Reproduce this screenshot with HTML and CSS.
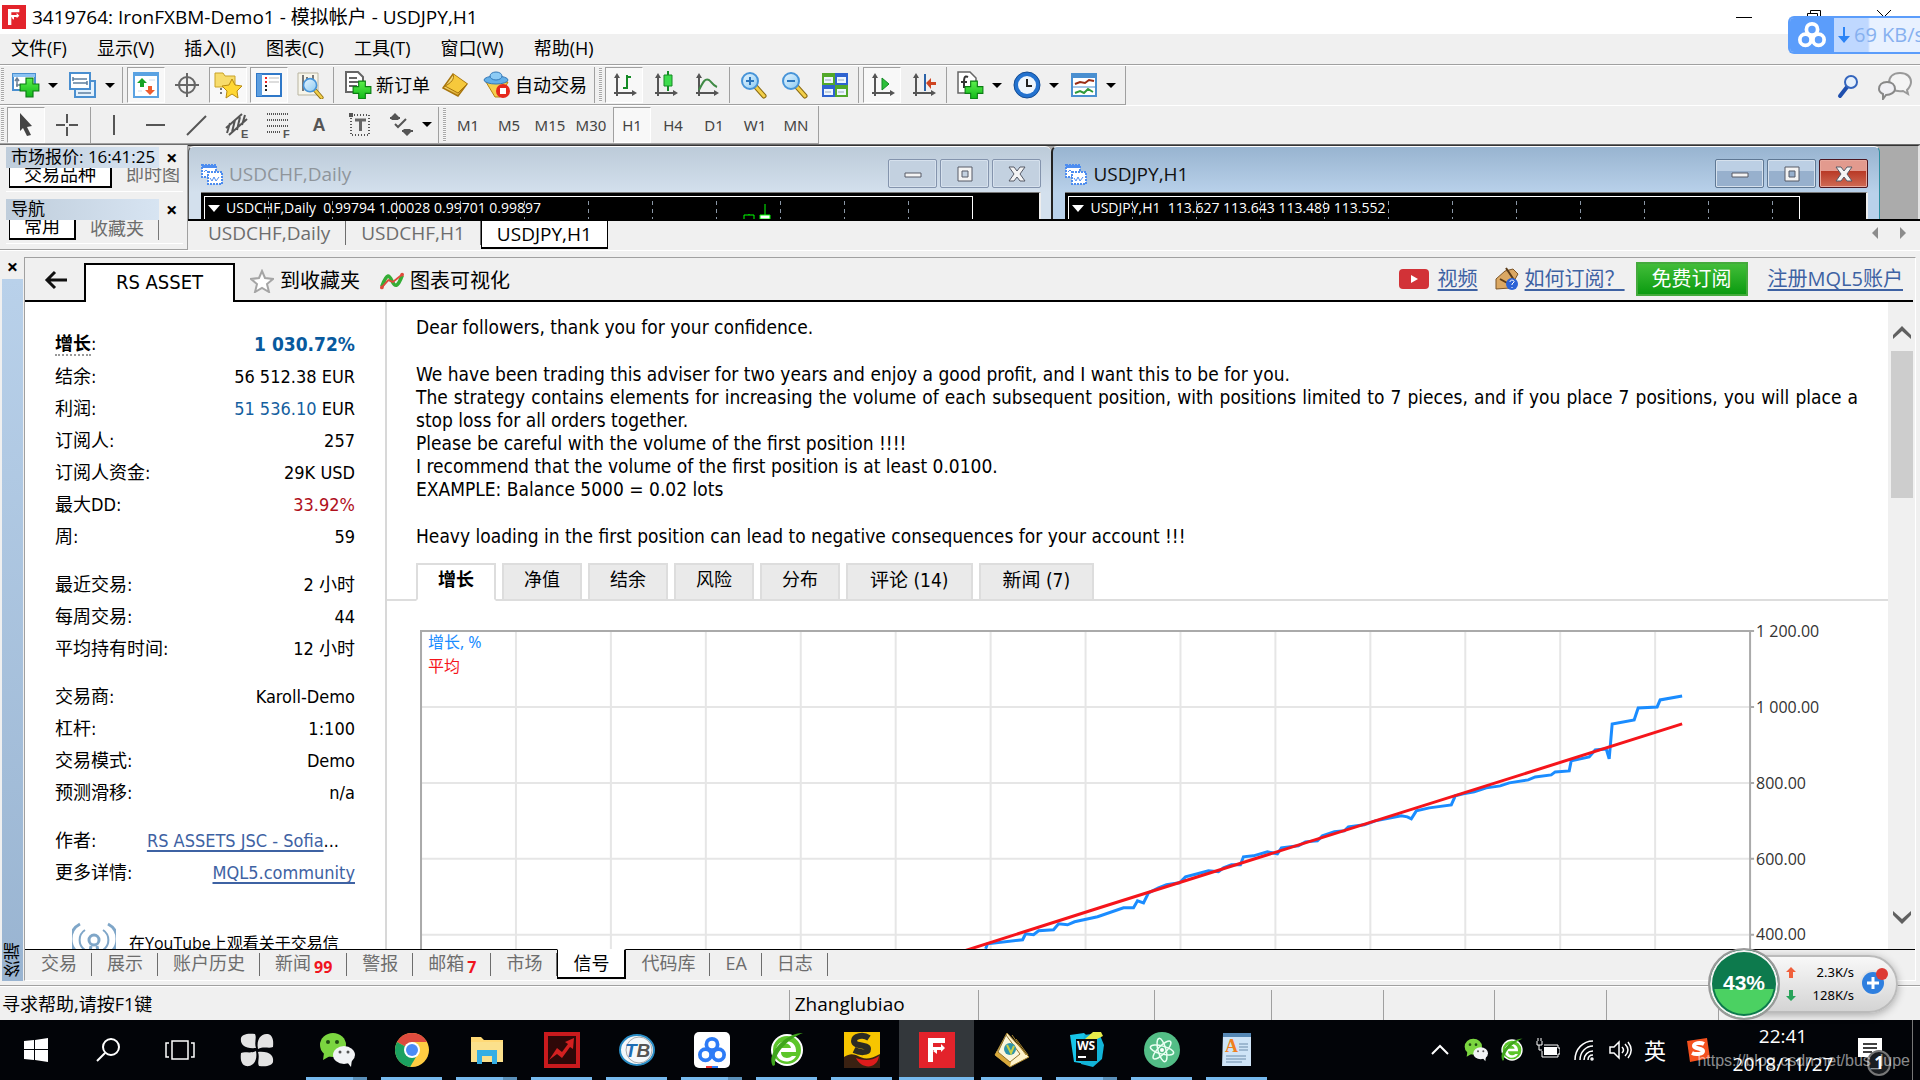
FILE: index.html
```html
<!DOCTYPE html>
<html lang="zh-CN">
<head>
<meta charset="utf-8">
<title>3419764: IronFXBM-Demo1 - 模拟帐户 - USDJPY,H1</title>
<link rel="stylesheet" href="styles.css">
</head>
<body>
<svg class="sprite" aria-hidden="true">
  <defs>
    <linearGradient id="gold" x1="0" y1="0" x2="1" y2="1"><stop offset="0" stop-color="#fdf3a0"/><stop offset="1" stop-color="#d99a12"/></linearGradient>
    <linearGradient id="lens" x1="0" y1="0" x2="1" y2="1"><stop offset="0" stop-color="#e8f6ff"/><stop offset="1" stop-color="#8ccaf2"/></linearGradient>
    <linearGradient id="plus" x1="0" y1="0" x2="0" y2="1"><stop offset="0" stop-color="#5cf04c"/><stop offset="1" stop-color="#10b818"/></linearGradient>
  </defs>
  <symbol id="axes" viewBox="0 0 28 28"><path d="M7 25V4M4 22h21" stroke="#555" stroke-width="2" fill="none"/><path d="M4 7l3-5 3 5zM22 19l5 3-5 3z" fill="#555"/></symbol>
  <symbol id="add" viewBox="0 0 18 18"><path d="M6 1h6v5h5v6h-5v5H6v-5H1V6h5z" fill="url(#plus)" stroke="#0a7d12" stroke-width="1"/></symbol>
  <symbol id="wechat" viewBox="0 0 36 36">
    <ellipse cx="14" cy="13" rx="13" ry="12" fill="#7bd540"/><path d="M5 21l-1 7 7-4z" fill="#7bd540"/><circle cx="9" cy="10" r="2" fill="#214d12"/><circle cx="18" cy="10" r="2" fill="#214d12"/>
    <ellipse cx="25" cy="23" rx="11" ry="9" fill="#f1f3f5"/><path d="M28 30l4 5 1-8z" fill="#f1f3f5"/><circle cx="21" cy="20" r="1.500" fill="#555"/><circle cx="29" cy="20" r="1.500" fill="#555"/>
  </symbol>
  <symbol id="esafe" viewBox="0 0 36 36">
    <circle cx="18" cy="18" r="16" fill="#fff"/><circle cx="18" cy="18" r="14" fill="#5cc52a"/>
    <path d="M27 20H12c0 7 8 7 11 4h4c-3 8-20 8-20-5C7 6 28 5 27 20zM12 16h10c-1-6-9-6-10 0z" fill="#fff"/>
    <path d="M4 34C-4 22 18 0 34 1 22 5 5 20 6 33z" fill="#3fa51c"/>
  </symbol>
  <symbol id="netdisk" viewBox="0 0 30 30"><g fill="none" stroke="currentColor" stroke-width="4"><circle cx="15" cy="9" r="6"/><circle cx="8" cy="20" r="6"/><circle cx="22" cy="20" r="6"/></g></symbol>
  <symbol id="chartwin" viewBox="0 0 22 22"><path d="M1 2h14v12H1z" fill="#fff" stroke="#4d8df0" stroke-width="2" stroke-dasharray="2 1"/><path d="M1 2h14v3H1z" fill="#4d8df0"/><path d="M7 9h14v12H7z" fill="#fff" stroke="#4d8df0" stroke-width="2" stroke-dasharray="2 1"/><path d="M3 9l2-2 3 3M9 15l2 3 2-4 2 4 3-4" fill="none" stroke="#4d8df0" stroke-width="1"/></symbol>
  <symbol id="bigF" viewBox="0 0 36 36"><path d="M0 0h36v36H0z" fill="#e3232b"/><path d="M9 6h17v5H14v4h8v-3l4 4-4 4v-2h-8v12H9z" fill="#fff"/><path d="M14 19l4-3v6z" fill="#fff"/></symbol>
  <symbol id="lensicon" viewBox="0 0 28 28"><path d="M17 16l8 9" stroke="#8a6a10" stroke-width="5" stroke-linecap="round"/><path d="M17 16l8 9" stroke="#f2cf4a" stroke-width="3" stroke-linecap="round"/><circle cx="11" cy="10" r="8" fill="url(#lens)" stroke="#4794d8" stroke-width="2"/></symbol>
</svg>

<header class="titlebar">
  <svg class="app-icon" viewBox="0 0 36 36"><use href="#bigF"/></svg>
  <h1>3419764: IronFXBM-Demo1 - 模拟帐户 - USDJPY,H1</h1>
  <div class="win-controls">
    <button aria-label="Minimize"><svg viewBox="0 0 16 16"><path d="M0 8.500h16" /></svg></button>
    <button aria-label="Restore"><svg viewBox="0 0 16 16"><path d="M1.500 4.500h10v10h-10zM4.500 4V1.500h10v10H12"/></svg></button>
    <button aria-label="Close"><svg viewBox="0 0 16 16"><path d="M1 1l14 14M15 1L1 15"/></svg></button>
  </div>
</header>

<nav class="menubar">
  <button>文件(F)</button><button>显示(V)</button><button>插入(I)</button><button>图表(C)</button><button>工具(T)</button><button>窗口(W)</button><button>帮助(H)</button>
</nav>

<div class="toolrow first">
  <div class="toolbar">
    <span class="grip"></span>
    <button class="tb" aria-label="New chart"><svg viewBox="0 0 28 28"><path d="M1 3h22v16H1z" fill="#fff" stroke="#4a8fd0" stroke-width="2"/><path d="M1 3h22v3H1z" fill="#8cc3f3"/><path d="M5 8v8M3 10l2-3 2 3M4 14h8" stroke="#6a7f95" stroke-width="1.500" fill="none"/><use href="#add" x="7" y="6" width="21" height="21"/></svg></button>
    <button class="drop" aria-label="New chart list"></button>
    <button class="tb" aria-label="Profiles"><svg viewBox="0 0 28 28"><path d="M6 10h20v16H6z" fill="#e4f1fc" stroke="#4a8fd0" stroke-width="2"/><path d="M1 2h20v16H1z" fill="#fff" stroke="#4a8fd0" stroke-width="2"/><path d="M4 8h14M4 6v4M18 12H4M18 10v4M9 22h13" stroke="#5d7f9f" stroke-width="1.500"/></svg></button>
    <button class="drop" aria-label="Profile list"></button>
    <span class="sep"></span>
    <button class="tb on" aria-label="Market Watch"><svg viewBox="0 0 28 28"><path d="M2 2h24v24H2z" fill="#fff" stroke="#5aa2e2" stroke-width="2"/><path d="M2 2h24v3H2z" fill="#5aa2e2"/><path d="M10 7l5 5h-3v4H8v-4H5z" fill="#18a327"/><path d="M18 24l-5-5h3v-4h4v4h3z" fill="#ee5c2e"/><path d="M17 9h6M6 20h4" stroke="#cde"/></svg></button>
    <button class="tb" aria-label="Data Window"><svg viewBox="0 0 28 28" fill="none" stroke="#666"><circle cx="14" cy="14" r="8" stroke-width="2"/><path d="M14 2v24M2 14h24" stroke-width="2"/></svg></button>
    <button class="tb on" aria-label="Navigator"><svg viewBox="0 0 28 28"><path d="M1 2h8l2 3h10v11H1z" fill="#f7dc6c" stroke="#c9a227"/><path d="M7 17v8" stroke="#777" stroke-width="2" stroke-dasharray="2 2"/><path d="M18 8l3 6 7 1-5 5 1 7-6-4-6 4 1-7-5-5 7-1z" fill="#ffd733" stroke="#b98b10"/></svg></button>
    <button class="tb on" aria-label="Terminal"><svg viewBox="0 0 28 28"><path d="M2 3h24v22H2z" fill="#fff" stroke="#2f78c8" stroke-width="2"/><path d="M2 3h5v22H2z" fill="#5d9fe0"/><path d="M10 7h2M10 11h2" stroke="#e22" stroke-width="2"/><path d="M14 7h10M14 11h10" stroke="#bbb" stroke-width="1"/><path d="M10 15h2M10 19h2" stroke="#222" stroke-width="2"/></svg></button>
    <button class="tb" aria-label="Strategy Tester"><svg viewBox="0 0 28 28"><path d="M2 2h20v22H2z" fill="#f7f5ea" stroke="#b9b5a0"/><path d="M7 4v16M11 6v8M17 4v16" stroke="#777" stroke-width="2"/><use href="#lensicon" x="5" y="6" width="23" height="23"/></svg></button>
    <span class="sep"></span>
    <button class="tb wide"><svg viewBox="0 0 28 28"><path d="M2 1h12l5 5v15H2z" fill="#fff" stroke="#666" stroke-width="2"/><path d="M5 7h8M5 11h11M5 15h8" stroke="#666" stroke-width="2"/><use href="#add" x="8" y="9" width="20" height="20"/></svg><span>新订单</span></button>
    <button class="tb" aria-label="MetaEditor"><svg viewBox="0 0 28 28"><path d="M2 17L12 3l14 10-9 12z" fill="url(#gold)" stroke="#a8750c" stroke-width="1.500"/><path d="M12 3c2 5-2 9-8 12l13 7 9-9" fill="#f6c93c" stroke="#a8750c"/></svg></button>
    <button class="tb wide"><svg viewBox="0 0 28 28"><path d="M3 11h22l-8 15h-5z" fill="#f5cf4c" stroke="#b5820f"/><ellipse cx="13" cy="9" rx="12" ry="4" fill="#64b0e8" stroke="#3378b8"/><ellipse cx="13" cy="5" rx="6" ry="4" fill="#8ccbf5" stroke="#3378b8"/><circle cx="20" cy="20" r="7" fill="#e5281c"/><path d="M17 17h6v6h-6z" fill="#fff"/></svg><span>自动交易</span></button>
    <span class="sep"></span>
    <span class="grip"></span>
    <button class="tb on" aria-label="Bar chart"><svg viewBox="0 0 28 28"><use href="#axes"/><path d="M17 4v14M13 17h4M17 6h4" stroke="#148a25" stroke-width="2"/></svg></button>
    <button class="tb" aria-label="Candlesticks"><svg viewBox="0 0 28 28"><use href="#axes"/><path d="M17 0v20" stroke="#148a25" stroke-width="2"/><path d="M13 4h8v11h-8z" fill="#3ddc4c" stroke="#148a25"/></svg></button>
    <button class="tb" aria-label="Line chart"><svg viewBox="0 0 28 28"><use href="#axes"/><path d="M7 19c4-8 6-12 10-10 3 2 3 5 8 7" fill="none" stroke="#3f8a45" stroke-width="2"/></svg></button>
    <span class="sep"></span>
    <button class="tb" aria-label="Zoom in"><svg viewBox="0 0 28 28"><use href="#lensicon"/><path d="M7 10h8M11 6v8" stroke="#2a75bd" stroke-width="2"/></svg></button>
    <button class="tb" aria-label="Zoom out"><svg viewBox="0 0 28 28"><use href="#lensicon"/><path d="M7 10h8" stroke="#2a75bd" stroke-width="2"/></svg></button>
    <button class="tb" aria-label="Tile windows"><svg viewBox="0 0 28 28"><path d="M1 2h13v12H1zM14 14h13v12H14z" fill="#52a82a"/><path d="M14 2h13v12H14zM1 14h13v12H1z" fill="#2f63d0"/><path d="M3 6h9v6H3zM16 6h9v6h-9zM3 18h9v6H3zM16 18h9v6h-9z" fill="#eef6ff"/><path d="M4 9h6M17 9h6M4 21h6M17 21h6" stroke="#9ab" stroke-width="1"/></svg></button>
    <span class="sep"></span>
    <button class="tb on" aria-label="Auto scroll"><svg viewBox="0 0 28 28"><use href="#axes"/><path d="M14 7l7 6-7 6z" fill="#2cbf3a" stroke="#148a25"/></svg></button>
    <button class="tb" aria-label="Chart shift"><svg viewBox="0 0 28 28"><use href="#axes"/><path d="M16 3v17" stroke="#2a62a8" stroke-width="2"/><path d="M17 12l5-5v4h5v3h-5v4z" fill="#cf4420"/></svg></button>
    <span class="sep"></span>
    <button class="tb" aria-label="Indicators"><svg viewBox="0 0 28 28"><path d="M2 1h12l6 6v15H2z" fill="#fff" stroke="#666" stroke-width="1.500"/><path d="M12 6c-4-2-4 2-4 6v5M5 11h6" stroke="#333" stroke-width="2" fill="none"/><use href="#add" x="8" y="9" width="20" height="20"/></svg></button>
    <button class="drop" aria-label="Indicator list"></button>
    <button class="tb" aria-label="Periods"><svg viewBox="0 0 28 28"><circle cx="14" cy="14" r="13" fill="#2372cf" stroke="#134c94"/><circle cx="14" cy="14" r="9" fill="#eef5fc"/><path d="M14 8v7h5" stroke="#222" stroke-width="2" fill="none"/></svg></button>
    <button class="drop" aria-label="Period list"></button>
    <button class="tb" aria-label="Templates"><svg viewBox="0 0 28 28"><path d="M2 3h24v22H2z" fill="#fff" stroke="#4a8fd0" stroke-width="2"/><path d="M2 3h24v4H2z" fill="#4a8fd0"/><path d="M5 13l5-2 5 1 4-3 5 1" fill="none" stroke="#9a2c14" stroke-width="2"/><path d="M3 16h22" stroke="#4a8fd0"/><path d="M5 22l5-2 4 2 4-4 5 3" fill="none" stroke="#2f9a3a" stroke-width="2"/></svg></button>
    <button class="drop" aria-label="Template list"></button>
  </div>
  <div class="tool-end">
    <button aria-label="Search"><svg viewBox="0 0 28 28"><path d="M6 24l7-9" stroke="#1f4fae" stroke-width="4" stroke-linecap="round"/><circle cx="17" cy="10" r="6" fill="#e6f0fb" stroke="#3465bd" stroke-width="2"/></svg></button>
    <button aria-label="Chat"><svg viewBox="0 0 34 28"><path d="M22 1c7 0 11 4 11 9 0 4-2 6-4 8l1 4-5-3c-8 1-14-2-14-8 0-6 4-10 11-10z" fill="#f4f4f4" stroke="#999" stroke-width="2"/><path d="M9 10c5 0 8 3 8 7 0 3-4 6-9 6l-3 4v-5c-2-1-4-3-4-5 0-4 3-7 8-7z" fill="#f0f0f4" stroke="#888" stroke-width="2"/></svg></button>
  </div>
</div>

<div class="toolrow second">
  <div class="toolbar">
    <span class="grip"></span>
    <button class="tb on" aria-label="Cursor"><svg viewBox="0 0 28 28"><path d="M8 2l12 13-5 1 4 8-4 1-4-8-3 3z" fill="#444"/></svg></button>
    <button class="tb" aria-label="Crosshair"><svg viewBox="0 0 28 28"><path d="M14 3v9M14 16v9M3 14h9M16 14h9" stroke="#555" stroke-width="2"/></svg></button>
    <span class="sep"></span>
    <button class="tb" aria-label="Vertical line"><svg viewBox="0 0 28 28"><path d="M14 4v20" stroke="#555" stroke-width="2"/></svg></button>
    <button class="tb" aria-label="Horizontal line"><svg viewBox="0 0 28 28"><path d="M5 14h19" stroke="#555" stroke-width="2"/></svg></button>
    <button class="tb" aria-label="Trendline"><svg viewBox="0 0 28 28"><path d="M5 24L24 5" stroke="#555" stroke-width="2"/></svg></button>
    <button class="tb" aria-label="Channel"><svg viewBox="0 0 28 28"><path d="M3 17L19 3M6 24L24 8M7 12l-3 10M12 9l-3 12M17 6l-3 13M22 4l-3 10" stroke="#555" stroke-width="2"/><text x="18" y="27" class="mini">E</text></svg></button>
    <button class="tb" aria-label="Fibonacci"><svg viewBox="0 0 28 28"><path d="M3 3h21M3 9h21M3 15h21M3 21h13" stroke="#555" stroke-width="2" stroke-dasharray="1 1"/><text x="19" y="27" class="mini">F</text></svg></button>
    <button class="tb letter">A</button>
    <button class="tb" aria-label="Text label"><svg viewBox="0 0 28 28"><path d="M5 4h18v20H5z" fill="none" stroke="#555" stroke-width="2" stroke-dasharray="1 2"/><path d="M9 9h11M14.500 9v11" stroke="#666" stroke-width="3"/><path d="M3 2h4v4H3z" fill="#555"/></svg></button>
    <button class="tb" aria-label="Arrows"><svg viewBox="0 0 28 28"><path d="M8 2l5 5-2 2H5L3 7zM20 25l5-5-2-2h-6l-2 2z" fill="#555"/><path d="M8 13l3 3 8-8M3 7h10M15 20h11" stroke="#555" stroke-width="2" fill="none"/></svg></button>
    <button class="drop near" aria-label="Arrow list"></button>
    <span class="sep"></span>
    <span class="grip"></span>
    <button class="tb tf">M1</button><button class="tb tf">M5</button><button class="tb tf">M15</button><button class="tb tf">M30</button><button class="tb tf on">H1</button><button class="tb tf">H4</button><button class="tb tf">D1</button><button class="tb tf">W1</button><button class="tb tf">MN</button>
  </div>
</div>

<div class="workspace">
  <aside class="docks">
    <section>
      <div class="dock-head"><h2>市场报价: 16:41:25</h2><button aria-label="Close">×</button></div>
      <div class="dock-tabs"><button class="on">交易品种</button><button>即时图</button></div>
    </section>
    <section>
      <div class="dock-head"><h2>导航</h2><button aria-label="Close">×</button></div>
      <div class="dock-tabs narrow"><button class="on">常用</button><button>收藏夹</button></div>
    </section>
  </aside>
  <div class="charts">
    <div class="mdi">
      <section class="child">
        <div class="child-head"><svg class="cicon" viewBox="0 0 22 22"><use href="#chartwin"/></svg><h2>USDCHF,Daily</h2>
          <button aria-label="Minimize"><svg viewBox="0 0 20 20"><path d="M2 9h16v4H2z" class="glyph"/></svg></button>
          <button aria-label="Maximize"><svg viewBox="0 0 20 20"><path d="M3 3h14v14H3zM7 7h6v6H7z" fill-rule="evenodd" class="glyph"/></svg></button>
          <button aria-label="Close"><svg viewBox="0 0 20 20"><path d="M2 3h5l3 4 3-4h5l-5 7 5 7h-5l-3-4-3 4H2l5-7z" class="glyph"/></svg></button></div>
        <div class="plot"><div class="frame"><i></i>USDCHF,Daily&nbsp; 0.99794 1.00028 0.99701 0.99897<svg class="candles" viewBox="0 0 32 16"><path d="M1 16v-4h10v4M6 12v-1M22 12V1" fill="none" stroke="#0f0" stroke-width="1"/><path d="M17 12h10v4H17z" fill="#fff" stroke="#0f0"/></svg></div></div>
      </section>
      <section class="child active">
        <div class="child-head"><svg class="cicon" viewBox="0 0 22 22"><use href="#chartwin"/></svg><h2>USDJPY,H1</h2>
          <button aria-label="Minimize"><svg viewBox="0 0 20 20"><path d="M2 9h16v4H2z" class="glyph"/></svg></button>
          <button aria-label="Maximize"><svg viewBox="0 0 20 20"><path d="M3 3h14v14H3zM7 7h6v6H7z" fill-rule="evenodd" class="glyph"/></svg></button>
          <button aria-label="Close" class="red"><svg viewBox="0 0 20 20"><path d="M2 3h5l3 4 3-4h5l-5 7 5 7h-5l-3-4-3 4H2l5-7z" class="glyph"/></svg></button></div>
        <div class="plot"><div class="frame"><i></i>USDJPY,H1&nbsp; 113.627 113.643 113.489 113.552</div></div>
      </section>
    </div>
    <div class="chart-tabs">
      <button>USDCHF,Daily</button><button>USDCHF,H1</button><button class="on">USDJPY,H1</button>
      <div class="arrows"><button aria-label="Scroll left"><svg viewBox="0 0 6 12"><path d="M6 0v12L0 6z"/></svg></button><button aria-label="Scroll right"><svg viewBox="0 0 6 12"><path d="M0 0v12l6-6z"/></svg></button></div>
    </div>
  </div>
</div>

<main class="terminal">
  <div class="rail"><button aria-label="Close">×</button><div class="rail-bar"><span>终端</span></div></div>
  <div class="panel">
    <div class="signal-head">
      <button class="back" aria-label="Back"><svg viewBox="0 0 24 20"><path d="M11 2L3 10l8 8M3 10h20" fill="none" stroke="#111" stroke-width="3"/></svg></button>
      <h2>RS ASSET</h2>
      <div class="head-actions">
        <button><svg viewBox="0 0 24 24"><path d="M12 2l3 7 8 1-6 5 2 8-7-4-7 4 2-8-6-5 8-1z" fill="#fff" stroke="#a5a5a5" stroke-width="2"/></svg>到收藏夹</button>
        <button><svg viewBox="0 0 26 24"><path d="M2 18c6-16 8-12 11-6s6 8 11-6" fill="none" stroke="#35ad36" stroke-width="4"/><path d="M2 19l7-8 5 2L24 5" fill="none" stroke="#e04a3c" stroke-width="2"/><circle cx="2" cy="19" r="2" fill="#e04a3c"/><circle cx="24" cy="5" r="2" fill="#e04a3c"/></svg>图表可视化</button>
      </div>
      <div class="head-links">
        <svg class="yt" viewBox="0 0 30 20"><rect width="30" height="20" rx="4" fill="#d23237"/><path d="M12 6l7 4-7 4z" fill="#fff"/></svg>
        <a href="#video">视频</a>
        <svg class="hand" viewBox="0 0 24 24"><path d="M1 22V12l9-8 8-2 5 5-8 14z" fill="#dba863" stroke="#7d5526"/><path d="M11 1l8 12M5 12l9 5" stroke="#5b3b18" stroke-width="2"/><circle cx="17" cy="17" r="6" fill="#2b62d6"/><path d="M15 15c0-3 5-2 4 0l-2 2v1M17 20v1" stroke="#fff" fill="none"/></svg>
        <a href="#how">如何订阅？</a>
        <button class="subscribe">免费订阅</button>
        <a href="#register" class="register">注册MQL5账户</a>
      </div>
    </div>
    <div class="signal-body">
      <aside class="stats">
        <table>
          <tbody>
            <tr class="growth"><th><abbr>增长</abbr>:</th><td>1 030.72%</td></tr>
            <tr><th>结余:</th><td>56 512.38 EUR</td></tr>
            <tr><th>利润:</th><td><span class="blue">51 536.10</span> EUR</td></tr>
            <tr><th>订阅人:</th><td>257</td></tr>
            <tr><th>订阅人资金:</th><td>29K USD</td></tr>
            <tr><th>最大DD:</th><td class="loss">33.92%</td></tr>
            <tr><th>周:</th><td>59</td></tr>
          </tbody>
          <tbody>
            <tr><th>最近交易:</th><td>2 小时</td></tr>
            <tr><th>每周交易:</th><td>44</td></tr>
            <tr><th>平均持有时间:</th><td>12 小时</td></tr>
          </tbody>
          <tbody>
            <tr><th>交易商:</th><td>Karoll-Demo</td></tr>
            <tr><th>杠杆:</th><td>1:100</td></tr>
            <tr><th>交易模式:</th><td>Demo</td></tr>
            <tr><th>预测滑移:</th><td>n/a</td></tr>
          </tbody>
          <tbody>
            <tr><th>作者:</th><td class="author"><a href="#author">RS ASSETS JSC - Sofia</a>...</td></tr>
            <tr><th>更多详情:</th><td><a href="#community">MQL5.community</a></td></tr>
          </tbody>
        </table>
        <div class="promo">
          <svg viewBox="0 0 44 44" fill="none" stroke="#7fa6c8" stroke-width="3"><circle cx="22" cy="20" r="5"/><path d="M13 30a12 12 0 0 1 0-20M31 30a12 12 0 0 0 0-20" stroke-width="2"/><path d="M8 34a17 17 0 0 1 0-30M36 34a17 17 0 0 0 0-30"/><path d="M19 26l-3 16M25 26l3 16"/></svg>
          <p>在YouTube上观看关于交易信</p>
        </div>
      </aside>
      <article class="details">
        <div class="about">
          <p>Dear followers, thank you for your confidence.</p>
          <p>We have been trading this adviser for two years and enjoy a good profit, and I want this to be for you.<br>The strategy contains elements for increasing the volume of each subsequent position, with positions limited to 7 pieces, and if you place 7 positions, you will place a stop loss for all orders together.<br>Please be careful with the volume of the first position !!!!<br>I recommend that the volume of the first position is at least 0.0100.<br>EXAMPLE: Balance 5000 = 0.02 lots</p>
          <p>Heavy loading in the first position can lead to negative consequences for your account !!!</p>
        </div>
        <div class="detail-tabs"><button class="on">增长</button><button>净值</button><button>结余</button><button>风险</button><button>分布</button><button class="counted">评论 (14)</button><button class="counted">新闻 (7)</button></div>
        <svg class="growth-chart" viewBox="0 0 1468 330">
          <path d="M96 11v319M191 11v319M286 11v319M381 11v319M476 11v319M571 11v319M666 11v319M761 11v319M856 11v319M951 11v319M1046 11v319M1141 11v319M1236 11v319M1 87h1329M1 163h1329M1 239h1329M1 315h1329" stroke="#e6e6e6" stroke-width="2" fill="none"/>
          <path d="M1 330V11h1334M1331 11v319M1331 87h4M1331 163h4M1331 239h4M1331 315h4" stroke="#aaa" stroke-width="2" fill="none"/>
          <g transform="translate(-420 -620)" fill="none" stroke-width="3">
            <path d="M986 949l2-5 35-4 3-6 8 1 5-4 15-1 5-6 9 1 7-3 23-5 26-9h10l4-7 6 2 5-10 10-5 8-3 13-2 6-6 12-3 11-3 10 1 5-4 8-3h9l3-8 10-1 14-4 10 2 4-6 17-2 7-4 12-1 5-5 12-4 10-1 4-4 16-2 11-4 26-5 6 1 4 2 5-8 13-3 22-3 4-9 8-2 11-2 12-4 14-2 9-3 19-3 7-3 16-2 4-3 14-1 2-10 18-4 6-7 11-1 3 10 3-35 22-4 4-12 19-1 3-7 22-4" stroke="#1a8cff"/>
            <path d="M965 951L1100 908L1683 724" stroke="#f5151b" stroke-width="3"/>
          </g>
          <text x="8" y="28" class="leg blue-t">增长, %</text>
          <text x="8" y="52" class="leg red-t">平均</text>
          <g class="scale"><text x="1337" y="17">1 200.00</text><text x="1337" y="93">1 000.00</text><text x="1337" y="169">800.00</text><text x="1337" y="245">600.00</text><text x="1337" y="320">400.00</text></g>
        </svg>
      </article>
      <div class="scrollbar"><svg viewBox="0 0 18 14"><path d="M0 13V9l9-9 9 9v4L9 5z"/></svg><div class="thumb"></div><svg viewBox="0 0 18 14" class="down"><path d="M0 1v4l9 9 9-9V1L9 9z"/></svg></div>
    </div>
    <nav class="terminal-tabs"><button>交易</button><button>展示</button><button>账户历史</button><button>新闻<sub>99</sub></button><button>警报</button><button>邮箱<sub>7</sub></button><button>市场</button><button class="on">信号</button><button>代码库</button><button>EA</button><button>日志</button></nav>
  </div>
</main>

<footer class="statusbar"><span class="help">寻求帮助,请按F1键</span><span class="user">Zhanglubiao</span><span class="c2"></span><span class="c3"></span><span></span><span></span><span></span><span></span><span class="c5"></span></footer>

<div class="taskbar">
  <div class="apps">
    <button class="sys" aria-label="Start"><svg viewBox="0 0 24 24"><path d="M0 3l10-1v9H0zM11 2l13-2v11H11zM0 12h10v10L0 21zM11 12h13v12l-13-2z" fill="#fff"/></svg></button>
    <button class="sys" aria-label="Search"><svg viewBox="0 0 24 24" fill="none" stroke="#fff" stroke-width="2"><circle cx="15" cy="9" r="8"/><path d="M9 15l-8 8"/></svg></button>
    <button class="sys" aria-label="Task view"><svg class="tv" viewBox="0 0 30 20" fill="none" stroke="#fff" stroke-width="1.500"><path d="M7 1h16v18H7zM4 3H1v14h3M26 3h3v14h-3"/></svg></button>
    <button class="app idle" aria-label="Fan"><svg viewBox="0 0 36 36" fill="#e3e3e3"><path d="M17 16C5 17 1 12 2 6c1-3 5-5 14-4 2 4-1 8 1 14z"/><path d="M19 17c-2-11 4-16 10-15 4 1 6 5 5 13-4 2-9-1-15 2z"/><path d="M19 20c12-1 16 4 15 10-1 3-5 5-14 4-2-4 1-8-1-14z"/><path d="M17 19c2 11-4 16-10 15-4-1-6-5-5-13 4-2 9 1 15-2z"/></svg></button>
    <button class="app multi" aria-label="WeChat"><svg viewBox="0 0 36 36"><use href="#wechat"/></svg></button>
    <button class="app" aria-label="Chrome"><svg viewBox="0 0 36 36"><circle cx="18" cy="18" r="17" fill="#ffcd42"/><path d="M18 18L3 10A17 17 0 0 1 33 10H18z" fill="#de4b3e"/><path d="M18 18L3 10a17 17 0 0 0 13 25l6-10z" fill="#1ba160"/><circle cx="18" cy="18" r="8" fill="#fff"/><circle cx="18" cy="18" r="6" fill="#4c8bf5"/></svg></button>
    <button class="app multi" aria-label="Explorer"><svg viewBox="0 0 36 36"><path d="M2 5h10l3 3h19v22H2z" fill="#ffd976"/><path d="M2 10h32v20H2z" fill="#fbe08c"/><path d="M8 32V18h20v14h-5v-8H13v8z" fill="#35aee4"/></svg></button>
    <button class="app" aria-label="Trading"><svg viewBox="0 0 36 36"><path d="M0 0h36v36H0z" fill="#c91a1d"/><path d="M4 4h28v28H4z" fill="#2e0808"/><path d="M5 28l8-12 5 4 6-8-3-2 9-4-1 11-3-2-8 11-5-4z" fill="#d32020"/></svg></button>
    <button class="app" aria-label="TB"><svg viewBox="0 0 36 36"><ellipse cx="18" cy="18" rx="17" ry="15" fill="#f4f8fb" stroke="#2a8cc4" stroke-width="2"/><ellipse cx="20" cy="18" rx="13" ry="13" fill="none" stroke="#aaa"/><text x="6" y="25" class="tb-mark" fill="#1c6db5">T<tspan fill="#555">B</tspan></text></svg></button>
    <button class="app multi" aria-label="Netdisk"><svg viewBox="0 0 36 36"><rect width="36" height="36" rx="5" fill="#fff"/><use href="#netdisk" x="4" y="4" width="28" height="28" color="#2d7bf6"/><path d="M12 34h6v2h-6z" fill="#e33"/><path d="M18 34h6v2h-6z" fill="#2d7bf6"/></svg></button>
    <button class="app" aria-label="Browser"><svg viewBox="0 0 36 36"><use href="#esafe"/></svg></button>
    <button class="app" aria-label="Sublime"><svg viewBox="0 0 36 36"><path d="M0 0h36v36H0z" fill="#f7c500"/><path d="M0 25c6-4 10-3 14-1s10 5 22-2v14H0z" fill="#3a2112"/><path d="M12 26c6 2 14 4 23-2-2 14-18 13-23 2z" fill="#de1c1c"/><path d="M25 6c-6-4-15-2-15 3 0 6 14 3 14 8 0 4-8 4-14 1" fill="none" stroke="#2b2b23" stroke-width="6"/></svg></button>
    <button class="app current" aria-label="MetaTrader"><svg viewBox="0 0 36 36"><use href="#bigF"/></svg></button>
    <button class="app" aria-label="Cards"><svg viewBox="0 0 36 36"><path d="M13 1l22 24-19 10L1 23z" fill="#fff3cb" stroke="#a8842c"/><path d="M1 23l15 12 1-5L3 19z" fill="#d9a93a"/><path d="M12 3l14 19-10 8L4 20z" fill="#fbf6da" stroke="#8f722c"/><path d="M18 3l14 20M22 7l12 16" stroke="#a8842c"/><ellipse cx="16" cy="17" rx="6" ry="6" fill="#2f93a8"/><path d="M13 13l4 8 3-7" stroke="#c9cf42" stroke-width="2" fill="none"/></svg></button>
    <button class="app multi" aria-label="WebStorm"><svg viewBox="0 0 36 36"><path d="M1 3l14-2 4 4-2 27-12-2z" fill="#18c5e8"/><path d="M15 3l15-2 5 12-2 14-9 8-12-3z" fill="#12b4d8"/><path d="M16 7l8-7h8l2 4-12 6z" fill="#e8ec4a"/><path d="M7 7h21v22H7z" fill="#0b0b0b"/><text x="8" y="18" class="ws">WS</text><path d="M9 25h8" stroke="#fff" stroke-width="2"/></svg></button>
    <button class="app" aria-label="Atom"><svg viewBox="0 0 36 36"><circle cx="18" cy="18" r="18" fill="#53bd86"/><g fill="none" stroke="#eafff3" stroke-width="1.500"><ellipse cx="18" cy="18" rx="4" ry="12" transform="rotate(-15 18 18)"/><ellipse cx="18" cy="18" rx="4" ry="12" transform="rotate(45 18 18)"/><ellipse cx="18" cy="18" rx="4" ry="12" transform="rotate(105 18 18)"/></g><circle cx="18" cy="18" r="2" fill="#fff"/></svg></button>
    <button class="app" aria-label="WordPad"><svg viewBox="0 0 36 36"><path d="M4 2h28v32H3z" fill="#cfe4f7"/><path d="M4 1h28v4H4z" fill="#5688b5"/><text x="6" y="20" class="wp">A</text><path d="M20 12h9M20 15h9M20 18h9M7 24h20M7 27h20M7 30h16" stroke="#6d8cab" stroke-width="1"/></svg></button>
  </div>
  <div class="tray">
    <svg class="t18" viewBox="0 0 18 18"><path d="M1 13l8-8 8 8" fill="none" stroke="#fff" stroke-width="2"/></svg>
    <svg class="t24" viewBox="0 0 36 36"><use href="#wechat"/></svg>
    <svg class="t24" viewBox="0 0 36 36"><use href="#esafe"/></svg>
    <svg class="t24" viewBox="0 0 24 24"><path d="M8 9h13v8H8z" fill="#fff"/><path d="M8 7h14v3h2v6h-2v3H6v-6M1 3v4h5V3M2 0v3M5 0v3M3 7v5h3" fill="none" stroke="#fff"/></svg>
    <svg class="t24" viewBox="0 0 24 24" fill="none" stroke="#fff" stroke-width="1.500"><path d="M3 22C3 11 11 3 21 3M8 22c0-8 6-14 13-14M12 22c0-5 4-9 9-9M16 22c0-3 2-5 5-5"/><circle cx="20" cy="21" r="1"/></svg>
    <svg class="t24" viewBox="0 0 24 24" fill="none" stroke="#fff" stroke-width="1.500"><path d="M2 9h4l5-5v16l-5-5H2zM14 9c2 2 2 4 0 6M17 6c4 4 4 8 0 12M20 4c4 5 4 11 0 16"/></svg>
    <span class="ime">英</span>
    <svg class="t24 sogou" viewBox="0 0 24 24"><path d="M1 3l20-3 3 20-20 4z" fill="#f4511e"/><path d="M18 6c-4-2-10-1-10 2s9 2 9 5-7 4-11 2" fill="none" stroke="#fff" stroke-width="4"/></svg>
    <div class="clock"><time>22:41</time><time>2018/11/27</time></div>
    <div class="notice"><svg viewBox="0 0 24 24"><path d="M0 0h24v19h-6v5l-6-5H0z" fill="#fff"/><path d="M5 6h14M5 10h14M5 14h9" stroke="#000" stroke-width="1.500"/></svg><b>1</b></div>
  </div>
  <div class="watermark">https://blog.csdn.net/bus_lupe</div>
</div>

<div class="disk-widget"><span class="logo"><svg viewBox="0 0 30 30"><use href="#netdisk"/></svg></span><svg class="dl" viewBox="0 0 12 16"><path d="M5 0h2v9h5l-6 7-6-7h5z" fill="#2b83f6"/></svg>69 KB/s</div>

<div class="net-widget">
  <div class="ball">43%</div>
  <div class="rates"><span><svg viewBox="0 0 10 12"><path d="M5 0l5 5H7v6H3V5H0z" fill="#f0603c"/></svg>2.3K/s</span><span><svg viewBox="0 0 10 12"><path d="M5 11l5-5H7V0H3v6H0z" fill="#29a35a"/></svg>128K/s</span></div>
  <svg class="more" viewBox="0 0 28 30"><circle cx="13" cy="17" r="13" fill="#e4e4e4"/><circle cx="13" cy="17" r="11" fill="#2f7fdf"/><path d="M7 17h12M13 11v12" stroke="#fff" stroke-width="3"/><circle cx="22" cy="8" r="6" fill="#dd3b34"/></svg>
</div>
</body>
</html>
```
FILE: styles.css
```css
* { box-sizing: border-box; }

:root {
  --ui: "Open Sans", "Noto Sans CJK SC", sans-serif;
  --doc: "DejaVu Sans Condensed", "Noto Sans", "Noto Sans CJK SC", sans-serif;
  --face: #f0f0f0;
  --line: #a0a0a0;
}

body {
  margin: 0;
  height: 100vh;
  display: flex;
  flex-direction: column;
  overflow: hidden;
  position: relative;
  background: var(--face);
  color: #000;
  font: 18px/24px var(--ui);
}

button {
  margin: 0;
  padding: 0;
  border: 0;
  background: none;
  color: inherit;
  font: inherit;
  white-space: nowrap;
}

h1, h2, p { margin: 0; font: inherit; }
svg { display: block; flex: none; }
.sprite { position: absolute; width: 0; height: 0; }

/* window title and menu */
.titlebar { display: flex; align-items: center; height: 34px; padding-left: 2px; background: #fff; font-size: 19px; }
.app-icon { width: 24px; height: 24px; margin-right: 6px; }
.win-controls { display: flex; align-items: center; gap: 54px; margin-left: auto; padding-right: 28px; }
.win-controls svg { width: 16px; height: 16px; fill: none; stroke: #000; stroke-width: 1; }

.menubar { display: flex; align-items: center; gap: 30px; height: 31px; padding: 0 0 2px 11px; border-bottom: 1px solid var(--line); }

/* toolbars */
.toolrow { display: flex; justify-content: space-between; height: 40px; border-top: 1px solid #fff; }
.toolbar { display: flex; align-items: center; gap: 3px; padding-left: 1px; border-right: 1px solid var(--line); border-bottom: 1px solid var(--line); padding-right: 3px; }
.first .toolbar { padding-right: 6px; }
.grip { width: 3px; height: 34px; background: repeating-linear-gradient(#a8a8a8 0 1px, #f8f8f8 1px 2px); }
.sep { width: 1px; height: 36px; background: var(--line); margin: 0 1px; }
.tb { display: flex; align-items: center; justify-content: center; min-width: 38px; height: 36px; border: 1px solid transparent; }
.tb svg { width: 28px; height: 28px; }
.tb.on { border-color: #a0a0a0 #fff #fff #a0a0a0; background: #f8f8f8; }
.tb.wide { gap: 4px; padding: 0 2px 0 5px; }
.drop { display: flex; width: 16px; height: 36px; margin-left: -3px; align-items: center; justify-content: center; }
.drop.near { width: 14px; }
.drop::after { content: ""; border: 5px solid transparent; border-top-color: #000; border-bottom: 0; }
.second { border-bottom: 1px solid #6c6c6c; }
.letter { font: bold 18px/24px "Liberation Sans", sans-serif; color: #555; }
.tf { font: 15px/24px "Noto Sans", sans-serif; color: #444; }
.mini { font: bold 11px "Liberation Sans", sans-serif; fill: #555; }
.tool-end { display: flex; align-items: center; gap: 16px; padding-right: 8px; }
.tool-end svg { width: 28px; height: 28px; }
.tool-end button:last-child svg { width: 34px; }

/* left docks and chart windows */
.workspace { display: flex; height: 105px; }
.docks { width: 188px; padding: 2px 4px 0 6px; border-right: 1px solid var(--line); border-bottom: 1px solid var(--line); }
.docks section { height: 52px; }
.dock-head { display: flex; align-items: center; gap: 7px; height: 21px; }
.dock-head h2 { flex: 0 0 153px; height: 21px; padding-left: 5px; font-size: 17px; line-height: 20px; background: linear-gradient(90deg, #bfcddb, #d7e4f2); }
.dock-head button, .rail > button { font: bold 20px/20px "Noto Sans", sans-serif; }
.dock-tabs { display: flex; align-items: flex-end; height: 24px; padding: 0 0 3px 3px; overflow: hidden; color: #6d6d6d; border-bottom: 1px solid #fff; }
.dock-tabs button { height: 30px; padding: 2px 14px 0; line-height: 26px; }
.dock-tabs .on { background: #fff; color: #000; border: 1px solid #000; border-bottom-width: 2px; border-right-width: 2px; }
.dock-tabs.narrow button:last-child { height: 26px; line-height: 22px; border-right: 1px solid #777; }

.charts { flex: 1; min-width: 0; display: flex; flex-direction: column; }
.mdi { display: flex; height: 74px; padding-right: 38px; overflow: hidden; background: #ababab; border-top: 1px solid #333; border-right: 2px solid #e3e3e3; }
.child { display: flex; flex-direction: column; flex: 865; padding: 0 10px 0 12px; background: linear-gradient(#bccbd9, #d3e0ed 46px); border-left: 1px solid #555; border-top: 1px solid #fff; border-radius: 6px 6px 0 0; }
.child.active { flex: 826; padding-right: 11px; background: linear-gradient(#98b4d0, #b9d1ea 46px); border-left: 2px solid #222; border-right: 1px solid #2c8fa0; }
.child-head { display: flex; align-items: center; gap: 3px; height: 46px; padding-top: 8px; font-size: 19px; }
.cicon { width: 22px; height: 22px; }
.child-head h2 { flex: 1; padding-left: 3px; color: #8f959b; }
.active .child-head h2 { color: #111; }
.child-head button { display: flex; align-items: center; justify-content: center; width: 49px; height: 29px; border: 1px solid #8494ad; border-radius: 2px; background: #c3d1e0; box-shadow: inset 0 0 0 1px #d6e1ed; }
.active .child-head button { border-color: #5f7894; background: linear-gradient(#bccfe4 40%, #97b0cd 42%); }
.active .child-head .red { border-color: #4c1620; background: linear-gradient(#e29a8e 40%, #b93a26 42%, #cf6b55); box-shadow: inset 0 0 0 1px #e8a89c; }
.child-head button svg { width: 20px; height: 20px; }
.glyph { fill: #f4f4f4; stroke: #565a66; stroke-width: 1; }
.plot { flex: 1; padding: 3px 66px 0 3px; background: #000; border-top: 1px solid #777; border-right: 2px solid #eee; }
.frame { position: relative; display: flex; align-items: center; height: 100%; padding-left: 3px; border: 1px solid #fff; border-bottom: 0; color: #fff; font: 14px/22px var(--ui); background: repeating-linear-gradient(#000 0 4px, transparent 4px 8px), repeating-linear-gradient(90deg, #000 0 63px, #8a97a5 63px 64px); white-space: nowrap; }
.frame i { margin-right: 6px; border: 6px solid transparent; border-top: 7px solid #fff; border-bottom: 0; }
.candles { position: absolute; left: 538px; bottom: 0; width: 32px; height: 16px; }

.chart-tabs { display: flex; align-items: flex-start; flex: 1; border-top: 2px solid #000; color: #6d6d6d; font-size: 19px; }
.chart-tabs button { padding: 0 15px; line-height: 24px; border-right: 1px solid #6d6d6d; }
.chart-tabs > button:first-child { padding-left: 20px; }
.chart-tabs .on { height: 28px; background: #fff; color: #000; border: 1px solid #000; border-top: 0; border-bottom-width: 2px; }
.chart-tabs .arrows { display: flex; align-items: center; gap: 22px; height: 24px; margin-left: auto; padding-right: 14px; }
.chart-tabs .arrows button { padding: 0; margin: 0; border: 0; }
.arrows svg { width: 6px; height: 12px; fill: #8c8c8c; }

/* terminal */
.terminal { flex: 1; min-height: 0; display: flex; padding: 6px 4px 4px 0; border-top: 1px solid #fff; border-bottom: 1px solid var(--line); }
.rail { display: flex; flex-direction: column; width: 24px; padding-left: 2px; }
.rail > button { height: 22px; width: 21px; padding-bottom: 8px; }
.rail-bar { flex: 1; width: 21px; display: flex; align-items: flex-end; justify-content: center; padding-bottom: 4px; background: linear-gradient(#b9d1ea, #99b4d1); }
.rail-bar span { writing-mode: vertical-rl; transform: rotate(180deg); font-size: 17px; line-height: 20px; }
.panel { flex: 1; min-width: 0; display: flex; flex-direction: column; border: 1px solid var(--line); border-right-color: #fff; border-bottom-color: #fff; }

.signal-head { display: flex; height: 44px; flex: none; margin-right: 2px; background: linear-gradient(#000, #000) bottom / 100% 2px no-repeat; font-size: 20px; line-height: 40px; }
.signal-head svg { width: 24px; height: 24px; }
.back { width: 59px; display: flex; align-items: center; justify-content: center; padding: 0 14px 0 16px; }
.signal-head h2 { width: 151px; margin-top: 5px; border: 2px solid #000; border-bottom: 0; background: #fff; text-align: center; line-height: 34px; font-family: var(--doc); }
.head-actions { display: flex; gap: 20px; padding-left: 15px; }
.head-actions button { display: flex; align-items: center; gap: 6px; height: 45px; }
.head-links { display: flex; align-items: center; height: 41px; margin-left: auto; padding-right: 10px; }
.head-links .yt { width: 30px; height: 20px; margin-right: 9px; }
.head-links .hand { margin: 0 6px 0 17px; }
a { color: #3e62a3; text-decoration: underline; text-underline-offset: 3px; text-decoration-thickness: 2px; text-decoration-skip-ink: none; }
.signal-head a { line-height: 30px; }
.subscribe { height: 34px; width: 112px; margin: 0 20px 0 11px; border: 2px solid #44aa3c; background: linear-gradient(#42bd39, #0b9b10); color: #fff; line-height: 28px; }

.signal-body { flex: 1; min-height: 0; display: flex; overflow: hidden; background: #fff; border-bottom: 1px solid #000; }
.stats { flex: none; width: 362px; padding: 24px 29px 0 30px; border-right: 2px solid #d8d8d8; font-family: var(--doc); }
.stats table { display: block; width: 300px; }
.stats tbody { display: block; }
.stats tbody + tbody { margin-top: 16px; }
.stats tr { display: flex; justify-content: space-between; align-items: center; height: 32px; }
.stats .growth { height: 35px; }
.stats th, .stats td { padding: 0; line-height: 24px; font-weight: normal; white-space: nowrap; }
.stats th { text-align: left; }
.stats td { text-align: right; }
.stats abbr { font-weight: bold; border-bottom: 2px dotted #999; }
.stats .growth td { font-weight: bold; font-size: 19px; color: #085a9e; }
.blue { color: #1460a0; }
.stats .loss { color: #b0101c; }
.stats .author { padding-right: 16px; }
.promo { display: flex; gap: 13px; padding: 31px 0 0 17px; font-size: 16px; white-space: nowrap; }
.promo svg { width: 44px; height: 44px; }
.promo p { padding-top: 11px; font-family: var(--ui); }

.details { flex: 1; min-width: 0; }
.about { padding: 14px 30px 0 29px; font: 19px/23px var(--doc); text-align: justify; }
.about p { margin-bottom: 24px; }
.detail-tabs { display: flex; gap: 6px; padding-left: 29px; margin-top: -9px; background: linear-gradient(#ddd, #ddd) bottom / 100% 2px no-repeat; font-family: var(--doc); }
.detail-tabs button { height: 38px; padding: 0 20px 5px; background: #eaeaea; border: 2px solid #ddd; }
.detail-tabs .counted { padding: 0 22px 5px; font-size: 19px; }
.detail-tabs .on { background: #fff; border-bottom-color: #fff; font-weight: bold; }
.growth-chart { width: calc(100% - 34px); height: auto; margin: 19px 0 0 33px; }
.leg { font: 16px "Noto Sans", "Noto Sans CJK SC", sans-serif; }
.blue-t { fill: #1a8cff; }
.red-t { fill: #f5151b; }
.scale { font: 16px "Open Sans", sans-serif; fill: #333; }

.scrollbar { flex: none; display: flex; flex-direction: column; align-items: center; width: 27px; padding: 24px 0 25px; background: var(--face); }
.scrollbar svg { width: 18px; height: 14px; fill: #606060; }
.scrollbar .down { margin-top: auto; }
.thumb { width: 22px; height: 147px; margin-top: 11px; background: #cdcdcd; }

.terminal-tabs { display: flex; flex: none; height: 30px; padding-left: 1px; color: #6d6d6d; }
.terminal-tabs button { display: flex; height: 30px; padding: 0 15px; line-height: 27px; background: linear-gradient(#6d6d6d, #6d6d6d) right 3px / 1px 23px no-repeat; }
.terminal-tabs sub { padding-left: 3px; font: bold 16px/35px var(--ui); color: #f0141e; }
.terminal-tabs .on { height: 30px; margin-top: -1px; background: #fff; color: #000; border: 1px solid #000; border-top-color: #fff; border-right-width: 2px; border-bottom-width: 2px; }

/* status bar */
.statusbar { display: flex; flex: none; height: 34px; padding-top: 3px; border-top: 1px solid #fff; line-height: 28px; }
.statusbar span { flex: 112; border-left: 1px solid var(--line); }
.statusbar .help { flex: 795; border: 0; padding-left: 2px; }
.statusbar .user { flex: 185; padding-left: 5px; font-size: 19px; }
.statusbar .c2 { flex: 177; }
.statusbar .c3 { flex: 117; }
.statusbar .c5 { flex: 203; }

/* task bar */
.taskbar { position: relative; flex: none; display: flex; height: 60px; background: #020408; color: #fff; }
.apps { display: flex; }
.apps button { display: flex; align-items: center; justify-content: center; height: 60px; }
.sys { width: 72px; }
.sys svg { width: 24px; height: 24px; }
.sys .tv { width: 30px; height: 22px; }
.app { width: 61px; margin: 0 7px; border-bottom: 3px solid #76b9ed; border-top: 3px solid transparent; }
.apps .idle { border-bottom-color: transparent; margin: 0 12px 0 10px; }
.multi { border-image: linear-gradient(90deg, #76b9ed 47px, #5a8fb8 47px) 0 0 3 0; }
.apps .current { width: 75px; margin: 0; background: #33373b; }
.app svg { width: 36px; height: 36px; }
.tb-mark { font: italic bold 19px "Liberation Sans", sans-serif; }
.ws { font: bold 12px "Open Sans", sans-serif; fill: #fff; }
.wp { font: bold 18px "Liberation Serif", serif; fill: #f08020; }

.tray { display: flex; align-items: center; gap: 12px; margin-left: auto; padding-right: 7px; }
.t18 { width: 18px; height: 18px; margin-right: 3px; }
.t24 { width: 24px; height: 24px; }
.ime { font-size: 22px; line-height: 30px; }
.sogou { margin-left: 8px; }
.clock { display: flex; flex-direction: column; align-items: center; width: 110px; margin-left: 6px; font-size: 19px; line-height: 28px; }
.notice { position: relative; padding: 0 30px 0 18px; margin-left: -10px; border-right: 1px solid #777; height: 60px; display: flex; align-items: center; }
.notice svg { width: 24px; height: 24px; }
.notice b { position: absolute; right: 21px; bottom: 4px; width: 24px; height: 26px; border: 2px solid #777; border-radius: 12px; background: #1b1e22; text-align: center; font: bold 17px/22px var(--ui); }
.watermark { position: absolute; right: 10px; bottom: 7px; color: rgba(255, 255, 255, 0.55); font: 16px/24px "Liberation Sans", sans-serif; }

/* floating widgets */
.disk-widget { position: absolute; right: 0; top: 16px; display: flex; align-items: center; width: 132px; height: 38px; overflow: hidden; border: 2px solid #5b9dfb; border-right: 0; border-radius: 6px 0 0 6px; background: linear-gradient(90deg, #bfd8ff 78px, #e8f1ff 80px); color: #86b0ef; font: 20px/34px var(--ui); white-space: nowrap; }
.disk-widget .logo { flex: none; width: 44px; height: 34px; display: flex; align-items: center; justify-content: center; margin-right: 4px; background: #5b9dfb; color: #fff; }
.disk-widget .logo svg { width: 30px; height: 28px; }
.dl { width: 12px; height: 16px; margin-right: 4px; }

.net-widget { position: absolute; right: 22px; bottom: 67px; display: flex; align-items: center; gap: 6px; width: 176px; height: 58px; padding-right: 8px; border: 2px solid #bbb; border-radius: 29px; background: linear-gradient(#f8f8f8, #d4d4d4); box-shadow: 0 2px 8px rgba(0, 0, 0, 0.3); }
.ball { flex: none; width: 72px; height: 72px; margin-left: -16px; border: 2px solid #999; border-radius: 50%; background: linear-gradient(#0d7a4d 58%, #4bd162 58%); box-shadow: inset 0 0 0 2px #f4f4f4, inset 0 0 0 4px #0d7a4d; color: #fff; text-align: center; font: bold 21px/66px "Liberation Sans", sans-serif; }
.rates { flex: 1; display: flex; flex-direction: column; font: 13px/23px "Noto Sans", sans-serif; }
.rates span { display: flex; align-items: center; justify-content: space-between; }
.rates svg { width: 10px; height: 12px; }
.more { width: 28px; height: 30px; margin-top: -6px; }
```
